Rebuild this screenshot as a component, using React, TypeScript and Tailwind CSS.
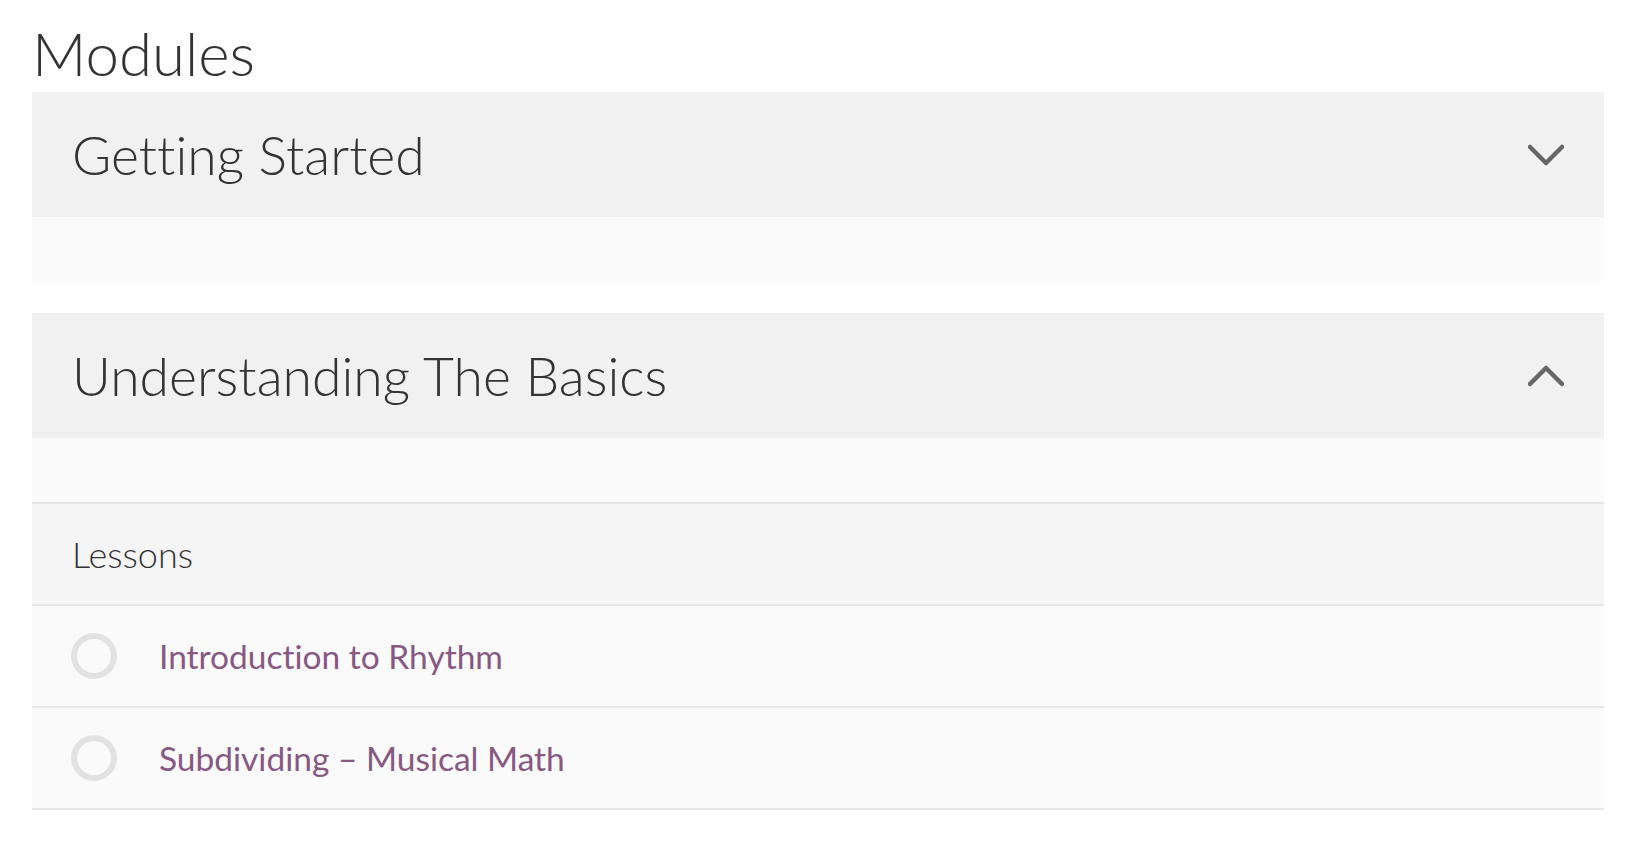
import React from "react";

const Chevron = ({ up }: { up?: boolean }) => (
  <svg width="36" height="22" viewBox="0 0 36 22" className="block">
    <polyline
      points={up ? "2,19 18,3 34,19" : "2,3 18,19 34,3"}
      fill="none"
      stroke="#666666"
      strokeWidth="4.5"
      strokeLinecap="round"
      strokeLinejoin="round"
    />
  </svg>
);

const Lesson = ({ title }: { title: string }) => (
  <div className="flex h-[102px] items-center border-b-2 border-[#e6e6e6] bg-[#fafafa] pl-[39px]">
    <div className="h-[46px] w-[46px] rounded-full border-[6px] border-[#e2e2e2]" />
    <a className="ml-[42px] text-[33.5px] font-normal text-[#875882]" href="#">
      {title}
    </a>
  </div>
);

export default function App() {
  return (
    <div
      className="min-h-screen bg-white pl-[32px] pr-[34px] text-[#333333] [font-variant-ligatures:none]"
      style={{ fontFamily: "Lato, 'Open Sans', sans-serif" }}
    >
      <h1 className="h-[92px] pt-[21px] text-[60px] font-light leading-[64px]">Modules</h1>

      <div className="flex h-[125px] items-center justify-between bg-[#f1f1f1] pl-[40px] pr-[40px]">
        <span className="text-[53.5px] font-light">Getting Started</span>
        <Chevron />
      </div>
      <div className="h-[64px] bg-[#fafafa]" />

      <div className="mt-[32px] flex h-[125px] items-center justify-between bg-[#f1f1f1] pl-[40px] pr-[40px]">
        <span className="text-[53.5px] font-light">Understanding The Basics</span>
        <Chevron up />
      </div>
      <div className="h-[66px] border-b-2 border-[#e6e6e6] bg-[#fafafa]" />
      <div className="flex h-[102px] items-center border-b-2 border-[#e6e6e6] bg-[#f5f5f5] pl-[40px]">
        <span className="text-[36px] font-light">Lessons</span>
      </div>
      <Lesson title="Introduction to Rhythm" />
      <Lesson title="Subdividing – Musical Math" />
    </div>
  );
}
